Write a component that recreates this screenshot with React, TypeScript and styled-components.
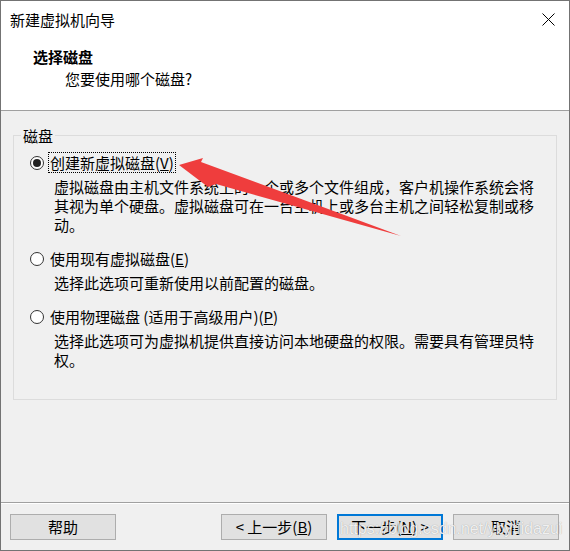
import React from "react";
import styled, { createGlobalStyle } from "styled-components";

const GlobalStyle = createGlobalStyle`
  html, body { margin: 0; padding: 0; background: #ffffff; }
  body { font-family: "Noto Sans CJK SC", "Noto Sans", sans-serif; }
  *, *::before, *::after { box-sizing: border-box; }
`;

const Window = styled.div`
  position: relative;
  width: 570px;
  height: 551px;
  border: 1px solid #737373;
  display: flex;
  flex-direction: column;
  background: #f0f0f0;
  font-family: "Noto Sans CJK SC", "Noto Sans", sans-serif;
  font-size: 15px;
  color: #000;
  overflow: hidden;
`;

const TitleBar = styled.div`
  height: 38px;
  flex: none;
  display: flex;
  align-items: center;
  justify-content: space-between;
  padding: 0 14px 0 9px;
  background: #ffffff;
`;

const TitleText = styled.span`
  line-height: 20px;
`;

const CloseIcon = styled.svg`
  width: 13px;
  height: 13px;
  display: block;
  margin-top: -2px;
`;

const Header = styled.div`
  height: 72px;
  flex: none;
  background: #ffffff;
  border-bottom: 1px solid #a0a0a0;
  padding: 7px 0 0 32px;
`;

const HeaderTitle = styled.div`
  font-weight: 700;
  line-height: 21px;
  margin-bottom: 1px;
`;

const HeaderSub = styled.div`
  line-height: 21px;
  padding-left: 32px;
`;

const Body = styled.div`
  flex: 1;
  padding: 15px 12px 0 12px;
`;

const Group = styled.fieldset`
  margin: 0;
  height: 274px;
  border: 1px solid #dcdcdc;
  padding: 0;
  min-width: 0;
`;

const GroupLabel = styled.legend`
  margin-left: 7px;
  padding: 0 2px;
  line-height: 19px;
`;

const Options = styled.div`
  padding: 7px 0 0 16px;
  display: flex;
  flex-direction: column;
  gap: 14px;
`;

const Option = styled.div`
  display: flex;
  flex-direction: column;
`;

const OptionRow = styled.label`
  display: flex;
  align-items: center;
  gap: 4px;
`;

const Radio = styled.span<{ $checked?: boolean }>`
  width: 14px;
  height: 14px;
  flex: none;
  border-radius: 50%;
  border: 1px solid #333333;
  background: #ffffff;
  display: grid;
  place-items: center;
  &::after {
    content: "";
    width: 8px;
    height: 8px;
    border-radius: 50%;
    background: ${(p) => (p.$checked ? "#222222" : "transparent")};
  }
`;

const OptionLabel = styled.span<{ $focused?: boolean }>`
  line-height: 19px;
  padding: 0 1px;
  border: 1px dotted ${(p) => (p.$focused ? "#000000" : "transparent")};
`;

const Desc = styled.div`
  margin-top: 4px;
  padding-left: 24px;
  line-height: 19px;
  width: 508px;
`;

const Footer = styled.div`
  height: 48px;
  flex: none;
  border-top: 1px solid #a0a0a0;
  box-shadow: inset 0 1px 0 #ffffff;
  padding: 11px 10px 0 9px;
  display: flex;
  justify-content: space-between;
  align-items: flex-start;
`;

const ButtonGroup = styled.div`
  display: flex;
  gap: 10px;
`;

const Button = styled.button<{ $primary?: boolean }>`
  width: 106px;
  height: 26px;
  margin: 0;
  padding: 0;
  background: #e1e1e1;
  border: ${(p) => (p.$primary ? "2px solid #0078d7" : "1px solid #adadad")};
  font-family: "Noto Sans CJK SC", "Noto Sans", sans-serif;
  font-size: 15px;
  line-height: 20px;
  color: #000;
  display: flex;
  align-items: center;
  justify-content: center;
`;

const Watermark = styled.div`
  position: absolute;
  left: 339px;
  top: 517px;
  font-family: "Liberation Sans", Arial, sans-serif;
  font-size: 16px;
  line-height: 22px;
  color: rgba(255, 255, 255, 0.85);
  text-shadow: 0 0 1px rgba(0, 0, 0, 0.35);
  pointer-events: none;
  white-space: nowrap;
`;

const ArrowLayer = styled.svg`
  position: absolute;
  left: -1px;
  top: -1px;
  width: 570px;
  height: 551px;
  pointer-events: none;
`;

export default function App() {
  return (
    <>
      <GlobalStyle />
      <Window>
        <TitleBar>
          <TitleText>新建虚拟机向导</TitleText>
          <CloseIcon viewBox="0 0 13 13">
            <path d="M0.5 0.5 L12.5 12.5 M12.5 0.5 L0.5 12.5" stroke="#000" strokeWidth="1" fill="none" />
          </CloseIcon>
        </TitleBar>
        <Header>
          <HeaderTitle>选择磁盘</HeaderTitle>
          <HeaderSub>您要使用哪个磁盘?</HeaderSub>
        </Header>
        <Body>
          <Group>
            <GroupLabel>磁盘</GroupLabel>
            <Options>
              <Option>
                <OptionRow>
                  <Radio $checked />
                  <OptionLabel $focused>
                    创建新虚拟磁盘(<u>V</u>)
                  </OptionLabel>
                </OptionRow>
                <Desc>
                  虚拟磁盘由主机文件系统上的一个或多个文件组成，客户机操作系统会将其视为单个硬盘。虚拟磁盘可在一台主机上或多台主机之间轻松复制或移动。
                </Desc>
              </Option>
              <Option>
                <OptionRow>
                  <Radio />
                  <OptionLabel>
                    使用现有虚拟磁盘(<u>E</u>)
                  </OptionLabel>
                </OptionRow>
                <Desc>选择此选项可重新使用以前配置的磁盘。</Desc>
              </Option>
              <Option>
                <OptionRow>
                  <Radio />
                  <OptionLabel>
                    使用物理磁盘 (适用于高级用户)(<u>P</u>)
                  </OptionLabel>
                </OptionRow>
                <Desc>
                  选择此选项可为虚拟机提供直接访问本地硬盘的权限。需要具有管理员特权。
                </Desc>
              </Option>
            </Options>
          </Group>
        </Body>
        <Footer>
          <Button>帮助</Button>
          <ButtonGroup>
            <Button>
              &lt; 上一步(<u>B</u>)
            </Button>
            <Button $primary>
              下一步(<u>N</u>) &gt;
            </Button>
            <Button>取消</Button>
          </ButtonGroup>
        </Footer>
        <ArrowLayer viewBox="0 0 570 551">
          <polygon
            points="179,165 203,158 201,162 401,236 216,184 208,187"
            fill="#ef3d3d"
          />
        </ArrowLayer>
        <Watermark>https://blog.csdn.net/ybytiidazui</Watermark>
      </Window>
    </>
  );
}
